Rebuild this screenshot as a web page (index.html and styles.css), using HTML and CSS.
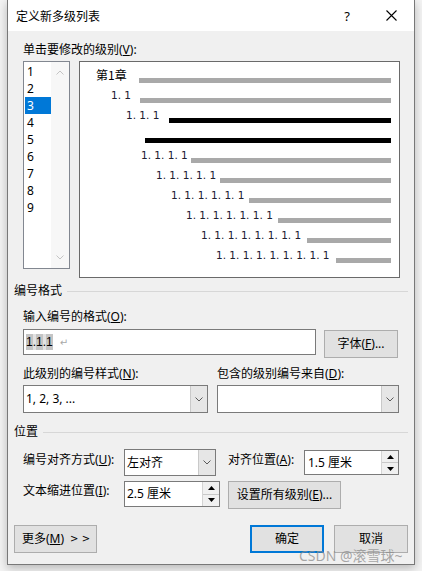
FILE: index.html
```html
<!DOCTYPE html>
<html lang="zh-CN">
<head>
<meta charset="utf-8">
<title>定义新多级列表</title>
<link rel="stylesheet" href="styles.css">
</head>
<body>
<div class="window">
  <div class="titlebar">
    <span class="title">定义新多级列表</span>
    <span class="help">?</span>
    <span class="close"><svg width="11" height="11" viewBox="0 0 11 11"><path d="M0.5 0.5L10.5 10.5M10.5 0.5L0.5 10.5" stroke="#000" stroke-width="1.1" fill="none"/></svg></span>
  </div>
  <div class="content">
    <div class="lbl">单击要修改的级别(<u>V</u>):</div>
    <div class="level-row">
      <div class="levels">
        <div class="items">
          <div class="item">1</div>
          <div class="item">2</div>
          <div class="item sel">3</div>
          <div class="item">4</div>
          <div class="item">5</div>
          <div class="item">6</div>
          <div class="item">7</div>
          <div class="item">8</div>
          <div class="item">9</div>
        </div>
        <div class="vscroll">
          <svg width="8" height="5" viewBox="0 0 8 5"><path d="M0.5 4.5L4 1L7.5 4.5" fill="none" stroke="#c4c4c4"/></svg>
          <svg width="8" height="5" viewBox="0 0 8 5"><path d="M0.5 0.5L4 4L7.5 0.5" fill="none" stroke="#c4c4c4"/></svg>
        </div>
      </div>
      <div class="preview">
        <div class="pv-row r1"><span class="pv-num cjk">第1章</span><span class="bar"></span></div>
        <div class="pv-row r2"><span class="pv-num">1. 1</span><span class="bar"></span></div>
        <div class="pv-row r3"><span class="pv-num">1. 1. 1</span><span class="bar dark"></span></div>
        <div class="pv-row r4"><span class="pv-num"></span><span class="bar dark"></span></div>
        <div class="pv-row r5"><span class="pv-num">1. 1. 1. 1</span><span class="bar"></span></div>
        <div class="pv-row r6"><span class="pv-num">1. 1. 1. 1. 1</span><span class="bar"></span></div>
        <div class="pv-row r7"><span class="pv-num">1. 1. 1. 1. 1. 1</span><span class="bar"></span></div>
        <div class="pv-row r8"><span class="pv-num">1. 1. 1. 1. 1. 1. 1</span><span class="bar"></span></div>
        <div class="pv-row r9"><span class="pv-num">1. 1. 1. 1. 1. 1. 1. 1</span><span class="bar"></span></div>
        <div class="pv-row r10"><span class="pv-num">1. 1. 1. 1. 1. 1. 1. 1. 1</span><span class="bar"></span></div>
      </div>
    </div>

    <div class="group"><span>编号格式</span><span class="rule"></span></div>
    <div class="lbl lbl-fmt">输入编号的格式(<u>O</u>):</div>
    <div class="input-row">
      <div class="textbox"><span class="hl">1</span><span class="dot">.</span><span class="hl">1</span><span class="dot">.</span><span class="hl">1</span><span class="para">↵</span></div>
      <div class="btn btn-font">字体(<u>F</u>)...</div>
    </div>
    <div class="two-labels">
      <span class="col1">此级别的编号样式(<u>N</u>):</span>
      <span>包含的级别编号来自(<u>D</u>):</span>
    </div>
    <div class="sel-row">
      <div class="combo combo1"><span class="val">1, 2, 3, ...</span><span class="dd"><svg width="8" height="5" viewBox="0 0 8 5"><path d="M0.5 0.5L4 4L7.5 0.5" fill="none" stroke="#5a5a5a"/></svg></span></div>
      <div class="combo combo2"><span class="val"></span><span class="dd"><svg width="8" height="5" viewBox="0 0 8 5"><path d="M0.5 0.5L4 4L7.5 0.5" fill="none" stroke="#5a5a5a"/></svg></span></div>
    </div>

    <div class="group group-pos"><span>位置</span><span class="rule"></span></div>
    <div class="pos-row pos1">
      <span class="plbl">编号对齐方式(<u>U</u>):</span>
      <div class="combo combo3"><span class="val">左对齐</span><span class="dd"><svg width="8" height="5" viewBox="0 0 8 5"><path d="M0.5 0.5L4 4L7.5 0.5" fill="none" stroke="#5a5a5a"/></svg></span></div>
      <span class="plbl plbl2">对齐位置(<u>A</u>):</span>
      <div class="spinner spin1"><span class="val">1.5 厘米</span>
        <span class="spin"><span class="sbtn"><svg width="7" height="4" viewBox="0 0 7 4"><path d="M0 4L3.5 0L7 4Z" fill="#000"/></svg></span><span class="sbtn"><svg width="7" height="4" viewBox="0 0 7 4"><path d="M0 0L3.5 4L7 0Z" fill="#000"/></svg></span></span>
      </div>
    </div>
    <div class="pos-row pos2">
      <span class="plbl">文本缩进位置(<u>I</u>):</span>
      <div class="spinner spin2"><span class="val">2.5 厘米</span>
        <span class="spin"><span class="sbtn"><svg width="7" height="4" viewBox="0 0 7 4"><path d="M0 4L3.5 0L7 4Z" fill="#000"/></svg></span><span class="sbtn"><svg width="7" height="4" viewBox="0 0 7 4"><path d="M0 0L3.5 4L7 0Z" fill="#000"/></svg></span></span>
      </div>
      <div class="btn btn-all">设置所有级别(<u>E</u>)...</div>
    </div>

    <div class="btm">
      <div class="btn btn-more">更多(<u>M</u>)<span class="arrows">&gt; &gt;</span></div>
      <div class="btn btn-ok">确定</div>
      <div class="btn btn-cancel">取消</div>
    </div>
  </div>
  <div class="watermark">CSDN @滚雪球~</div>
</div>
</body>
</html>
```

FILE: styles.css
```css
* { box-sizing: border-box; }
html, body { margin: 0; padding: 0; }
body {
  background: #f3f3f3;
  width: 422px;
  height: 571px;
  overflow: hidden;
  font-family: "Noto Sans", "Noto Sans CJK SC", sans-serif;
  font-size: 12px;
  color: #000;
}
u { text-decoration: underline; text-underline-offset: 1px; }

.window {
  position: relative;
  margin-left: 7px;
  width: 408px;
  border: 1px solid #787878;
  border-top: none;
  background: #f0f0f0;
  box-shadow: 0 3px 9px rgba(0,0,0,0.25);
}

.titlebar {
  height: 31px;
  background: #fff;
  display: flex;
  align-items: center;
  padding-left: 8px;
}
.title { flex: 1; line-height: 16px; font-family: "Noto Sans CJK SC", sans-serif; }
.help { width: 20px; text-align: center; font-size: 13px; line-height: 16px; margin-right: 11px; }
.close { width: 46px; height: 31px; display: flex; align-items: center; justify-content: center; }

.content { padding: 11px 6px 11px 6px; }

.lbl { line-height: 16px; margin-left: 9px; white-space: nowrap; }

.level-row { display: flex; align-items: flex-start; margin-top: 3px; margin-left: 9px; }

.levels {
  width: 47px;
  height: 208px;
  border: 1px solid #828790;
  background: #fff;
  display: flex;
}
.items { width: 27px; padding-top: 1px; }
.item {
  height: 17px;
  line-height: 17px;
  margin-left: 1px;
  padding-left: 2px;
  font-size: 12px;
}
.item.sel { background: #0078d7; color: #fff; }
.vscroll {
  width: 18px;
  background: #f7f7f7;
  display: flex;
  flex-direction: column;
  justify-content: space-between;
  align-items: center;
  padding: 8px 0 8px;
}
.vscroll svg { display: block; }

.preview {
  margin-left: 9px;
  width: 321px;
  height: 217px;
  border: 1px solid #6a6a6a;
  background: #fff;
  padding: 3px 8px 0 0;
}
.pv-row { display: flex; align-items: flex-start; height: 20px; }
.pv-num {
  flex: none;
  height: 20px;
  line-height: 20px;
  font-family: "DejaVu Sans", sans-serif;
  font-size: 10.5px;
  color: #202030;
  white-space: nowrap;
  overflow: visible;
}
.pv-num.cjk { font-family: "Noto Sans CJK SC", sans-serif; font-size: 12px; color: #000; }
.bar { flex: 1; height: 5px; margin-top: 13px; background: #a9a9a9; }
.bar.dark { background: #000; }

.r1 { padding-left: 16px; } .r1 .pv-num { width: 43px; }
.r2 { padding-left: 31px; } .r2 .pv-num { width: 29px; }
.r3 { padding-left: 46px; } .r3 .pv-num { width: 43px; }
.r4 { padding-left: 65px; } .r4 .pv-num { width: 0; }
.r5 { padding-left: 61px; } .r5 .pv-num { width: 50px; }
.r6 { padding-left: 76px; } .r6 .pv-num { width: 64px; }
.r7 { padding-left: 91px; } .r7 .pv-num { width: 78px; }
.r8 { padding-left: 106px; } .r8 .pv-num { width: 92px; }
.r9 { padding-left: 121px; } .r9 .pv-num { width: 106px; }
.r10 { padding-left: 136px; } .r10 .pv-num { width: 120px; }

.group { display: flex; align-items: center; margin-top: 5px; line-height: 16px; }
.rule { flex: 1; height: 1px; background: #d7d7d7; margin-left: 5px; }
.group-pos { margin-top: 11px; }

.lbl-fmt { margin-top: 10px; }

.input-row { display: flex; align-items: flex-start; margin-top: 4px; margin-left: 9px; }
.textbox {
  width: 293px;
  height: 26px;
  border: 1px solid #7a7a7a;
  background: #fff;
  display: flex;
  align-items: center;
  padding-left: 2px;
  font-family: "Liberation Sans", sans-serif;
  font-size: 12px;
}
.hl { background: #c4c4c4; line-height: 16px; }
.dot { background: #e2e2e2; line-height: 16px; }
.para { color: #a8a8a8; font-size: 10px; margin-left: 7px; font-family: "DejaVu Sans", sans-serif; }

.btn {
  background: #e1e1e1;
  border: 1px solid #adadad;
  display: flex;
  align-items: center;
  justify-content: center;
  line-height: 16px;
  white-space: nowrap;
}
.btn-font { margin-left: 8px; margin-top: 1px; width: 74px; height: 28px; }

.two-labels { display: flex; margin-top: 8px; margin-left: 9px; line-height: 16px; white-space: nowrap; }
.col1 { width: 194px; }

.sel-row { display: flex; margin-top: 3px; margin-left: 9px; }
.combo {
  display: flex;
  border: 1px solid #7a7a7a;
  background: #fff;
  height: 28px;
}
.combo .val { flex: 1; line-height: 26px; padding-left: 2px; white-space: nowrap; }
.combo .dd {
  width: 17px;
  background: #e6e6e6;
  border-left: 1px solid #c9c9c9;
  display: flex;
  align-items: center;
  justify-content: center;
}
.combo .dd svg { display: block; }
.combo1 { width: 185px; }
.combo2 { width: 182px; margin-left: 9px; }

.pos-row { display: flex; align-items: flex-start; margin-left: 9px; }
.pos1 { margin-top: 9px; }
.pos2 { margin-top: 5px; }
.plbl { width: 101px; line-height: 16px; margin-top: 3px; white-space: nowrap; flex: none; }
.pos2 .plbl { margin-top: 2px; }
.plbl2 { width: 76px; margin-left: 12px; }
.combo3 { width: 92px; height: 27px; }
.combo3 .val { line-height: 25px; padding-left: 2px; }

.spinner {
  display: flex;
  border: 1px solid #7a7a7a;
  background: #fff;
}
.spinner .val { flex: 1; padding-left: 3px; white-space: nowrap; }
.spin1 { width: 95px; height: 25px; margin-top: 1px; }
.spin1 .val { line-height: 23px; }
.spin2 { width: 96px; height: 26px; }
.spin2 .val { line-height: 24px; padding-left: 2px; }
.spin {
  width: 17px;
  display: flex;
  flex-direction: column;
  border-left: 1px solid #d4d4d4;
}
.sbtn {
  flex: 1;
  background: #f0f0f0;
  display: flex;
  align-items: center;
  justify-content: center;
}
.sbtn + .sbtn { border-top: 1px solid #c8c8c8; }
.sbtn svg { display: block; }

.btn-all { margin-left: 8px; width: 113px; height: 28px; }

.btm { display: flex; margin-top: 16px; }
.btn-more { width: 83px; height: 28px; justify-content: flex-start; padding-left: 7px; }
.arrows { font-size: 10px; margin-left: 6px; letter-spacing: 0; font-family: "DejaVu Sans", sans-serif; }
.btn-ok { margin-left: auto; width: 74px; height: 28px; border: 2px solid #0078d7; }
.btn-cancel { margin-left: 10px; width: 74px; height: 28px; }

.watermark {
  position: absolute;
  left: 291px;
  top: 548px;
  font-size: 14px;
  line-height: 15px;
  color: rgba(140,140,140,0.75);
  white-space: nowrap;
}
```
